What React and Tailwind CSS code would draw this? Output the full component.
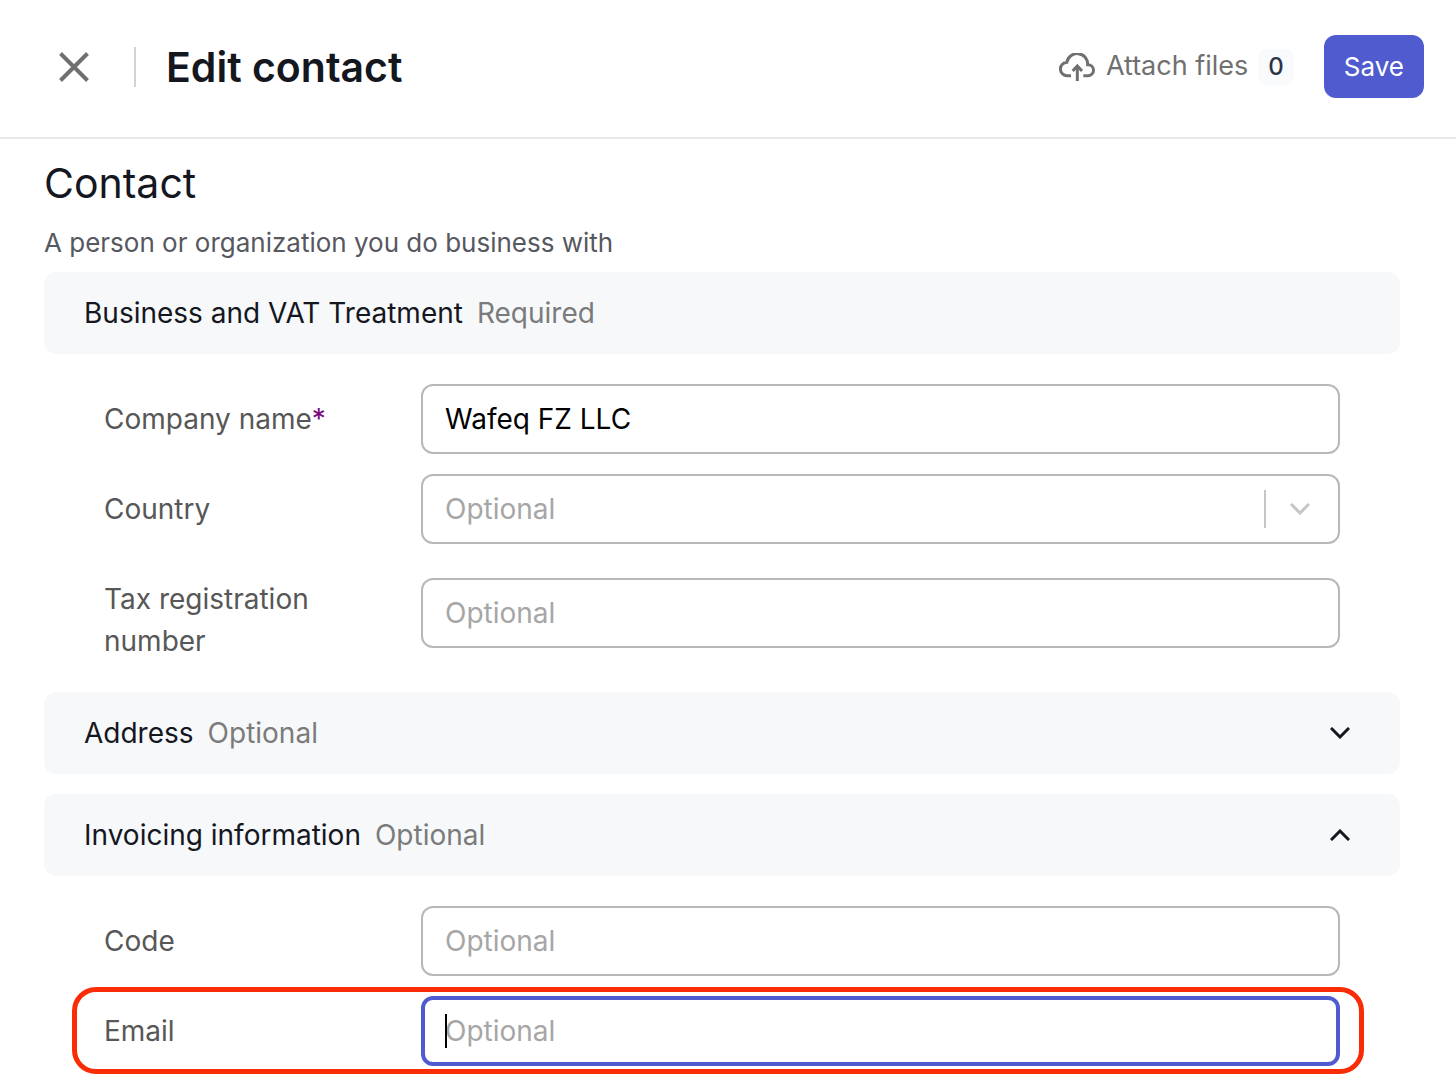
import { useState } from "react";

const Chevron = ({ up, className }) => (
  <svg width="20" height="12" viewBox="0 0 20 12" fill="none" className={className}>
    <path
      d={up ? "M1 11 L10 2 L19 11" : "M1 1 L10 10 L19 1"}
      stroke="currentColor"
      strokeWidth="3"
    />
  </svg>
);

const CloudUpload = () => (
  <svg width="37" height="28" viewBox="0 0 111 84" fill="none" stroke="currentColor" strokeWidth="9">
    <path d="M36 68 H25 A20 20 0 0 1 23.500 28 A31.500 31.500 0 0 1 86 35 A16.500 16.500 0 0 1 88 68 H73" />
    <path d="M55 84 V39" />
    <path d="M41 54 L55 39 L69 54" />
  </svg>
);

const Section = ({ title, hint, open, onToggle }) => (
  <div className="flex items-center justify-between rounded-xl bg-[#f7f8fa] py-5 pl-10 pr-[50px]">
    <h3 className="leading-[42px] text-[#15171f]">
      {title}
      <span className="ml-3.5 text-[#7b7b7b]">{hint}</span>
    </h3>
    {onToggle && (
      <button type="button" aria-label={`Toggle ${title}`} aria-expanded={open} onClick={onToggle}>
        <Chevron up={open} className="text-[#15171f]" />
      </button>
    )}
  </div>
);

const inputClass =
  "h-[70px] w-full appearance-none rounded-xl border-2 border-[#b8b8ba] bg-white px-[22px] text-black outline-none placeholder:text-[#a6a6a6]";

const Field = ({ id, label, required, children }) => (
  <div className="flex items-center">
    <label htmlFor={id} className="w-[317px] shrink-0 pr-20 leading-[42px] text-[#575757]">
      {label}
      {required && <span className="text-[#7a0a80]">*</span>}
    </label>
    <div className="relative flex-1">{children}</div>
  </div>
);

const App = () => {
  const [company, setCompany] = useState("Wafeq FZ LLC");
  const [email, setEmail] = useState("");
  const [addressOpen, setAddressOpen] = useState(false);
  const [invoicingOpen, setInvoicingOpen] = useState(true);

  return (
    <div className="bg-white font-[Inter,sans-serif] text-[28px]">

      {/* Header */}
      <header className="flex items-center border-b-2 border-[#e9e9e9] pb-[39px] pl-[59px] pr-8 pt-[35px]">
        <button type="button" aria-label="Close" className="text-[#707070]">
          <svg width="30" height="30" viewBox="0 0 30 30" fill="none">
            <path d="M1.5 1.5 L28.5 28.5 M28.5 1.5 L1.5 28.5" stroke="currentColor" strokeWidth="4" />
          </svg>
        </button>
        <div className="ml-[45px] h-10 w-0.5 bg-[#d2d2d2]"></div>
        <h1 className="ml-[30px] flex-1 text-[41px] font-semibold leading-[48px] text-[#15171f]">
          Edit contact
        </h1>

        <button type="button" className="flex items-center text-[27px] text-[#707070]">
          <CloudUpload />
          <span className="ml-2.5">Attach files</span>
          <span className="ml-2.5 rounded-lg bg-[#f9fafc] px-2.5 text-[24px] font-medium leading-[36px] text-[#2b3348]">
            0
          </span>
        </button>
        <button type="button" className="ml-[30px] h-[63px] rounded-xl bg-[#4f5bce] px-5 text-[26px] text-white">
          Save
        </button>
      </header>

      <main className="pb-[18px] pl-11 pr-14 pt-5">
        <h2 className="text-[41px] leading-[48px] text-[#15171f]">Contact</h2>
        <p className="mb-[9px] mt-4 text-[26px] leading-[40px] text-[#565860]">
          A person or organization you do business with
        </p>

        <Section title="Business and VAT Treatment" hint="Required" />

        <div className="flex flex-col gap-5 px-[60px] py-[30px]">
          <Field id="company" label="Company name" required>
            <input
              id="company"
              type="text"
              value={company}
              onChange={(e) => setCompany(e.target.value)}
              className={inputClass}
            />
          </Field>

          <Field id="country" label="Country">
            <select id="country" defaultValue="" className={`${inputClass} text-[#a6a6a6]!`}>
              <option value="">Optional</option>
            </select>
            <div className="pointer-events-none absolute inset-y-0 right-[30px] flex items-center gap-6 text-[#c6c6c6]">
              <span className="h-[38px] w-0.5 bg-[#c6c6c6]"></span>
              <Chevron />
            </div>
          </Field>

          <div className="mt-3.5 flex items-start">
            <label htmlFor="tax" className="w-[317px] shrink-0 pr-20 leading-[42px] text-[#575757]">
              Tax registration number
            </label>
            <input id="tax" type="text" placeholder="Optional" className={`${inputClass} flex-1`} />
          </div>
        </div>

        <div className="flex flex-col gap-5">
          <Section
            title="Address"
            hint="Optional"
            open={addressOpen}
            onToggle={() => setAddressOpen(!addressOpen)}
          />
          <Section
            title="Invoicing information"
            hint="Optional"
            open={invoicingOpen}
            onToggle={() => setInvoicingOpen(!invoicingOpen)}
          />
        </div>

        {invoicingOpen && (
          <div className="flex flex-col gap-5 px-[60px] pt-[30px]">
            <Field id="code" label="Code">
              <input id="code" type="text" placeholder="Optional" className={inputClass} />
            </Field>

            <div className="relative">
              <Field id="email" label="Email">
                <input
                  id="email"
                  type="email"
                  placeholder="Optional"
                  value={email}
                  onChange={(e) => setEmail(e.target.value)}
                  className="h-[70px] w-full rounded-xl border-4 border-[#4f5bce] bg-white px-5 text-black outline-none placeholder:text-[#a6a6a6]"
                />
                {!email && (
                  <span className="pointer-events-none absolute left-6 top-[18px] h-[34px] w-0.5 bg-black"></span>
                )}
              </Field>
              {/* Highlight ring */}
              <div className="pointer-events-none absolute -bottom-2 -left-8 -right-6 -top-[9px] rounded-3xl border-[5px] border-[#fa2c05]"></div>
            </div>
          </div>
        )}
      </main>

    </div>
  );
};

export default App;
